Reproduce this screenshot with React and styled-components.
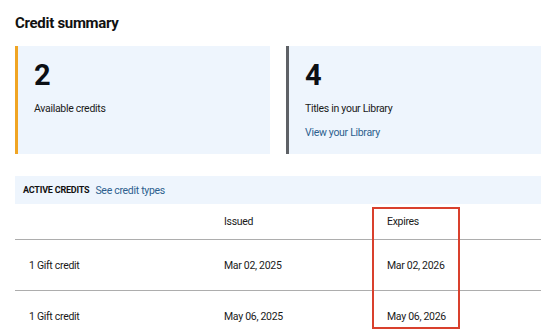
import React from 'react';
import styled, { createGlobalStyle } from 'styled-components';

const GlobalStyle = createGlobalStyle`
  body {
    margin: 0;
    background: #fff;
    font-family: Roboto, "Liberation Sans", Arial, sans-serif;
    color: #161616;
  }
`;

const credits = [
  { name: '1 Gift credit', issued: 'Mar 02, 2025', expires: 'Mar 02, 2026' },
  { name: '1 Gift credit', issued: 'May 06, 2025', expires: 'May 06, 2026' },
];

function App() {
  return (
    <>
      <GlobalStyle />
      <Page>
        <Title>Credit summary</Title>
        <Cards>
          <Card accent="#f0a524">
            <Count>2</Count>
            <Label>Available credits</Label>
          </Card>
          <Card accent="#5e6166">
            <Count>4</Count>
            <Label>Titles in your Library</Label>
            <CardLink href="#">View your Library</CardLink>
          </Card>
        </Cards>
        <Bar>
          <BarTitle>Active credits</BarTitle>
          <BarLink href="#">See credit types</BarLink>
        </Bar>
        <TableWrap>
          <Row header>
            <Cell />
            <Cell>Issued</Cell>
            <Cell>Expires</Cell>
          </Row>
          {credits.map((c, i) => (
            <Row key={i}>
              <Cell>{c.name}</Cell>
              <Cell>{c.issued}</Cell>
              <Cell>{c.expires}</Cell>
            </Row>
          ))}
          <Highlight />
        </TableWrap>
      </Page>
    </>
  );
}

const Page = styled.div`
  padding: 13px 9px 0 15px;
`;

const Title = styled.h1`
  margin: 0;
  font-size: 15px;
  line-height: 20px;
  font-weight: 700;
  letter-spacing: -0.3px;
  color: #111;
`;

const Cards = styled.div`
  display: grid;
  grid-template-columns: 1fr 1fr;
  gap: 16px;
  margin-top: 13px;
`;

const Card = styled.div`
  height: 108px;
  box-sizing: border-box;
  background: #eef5fd;
  border-left: 3px solid ${(p) => p.accent};
  padding: 15px 16px 0 16px;
  display: flex;
  flex-direction: column;
  align-items: flex-start;
`;

const Count = styled.div`
  font-size: 29px;
  line-height: 28px;
  font-weight: 700;
  color: #0c0f14;
`;

const Label = styled.div`
  margin-top: 12px;
  font-size: 10.5px;
  line-height: 16px;
  letter-spacing: -0.3px;
  color: #1a1a1a;
`;

const CardLink = styled.a`
  margin-top: 8px;
  font-size: 10.5px;
  line-height: 16px;
  letter-spacing: -0.3px;
  color: #2d5f8e;
  text-decoration: none;
`;

const Bar = styled.div`
  margin-top: 22px;
  height: 28px;
  background: #eef5fd;
  display: flex;
  align-items: center;
  gap: 6px;
  padding-left: 8px;
`;

const BarTitle = styled.span`
  font-size: 9px;
  font-weight: 700;
  letter-spacing: -0.2px;
  text-transform: uppercase;
  color: #111;
`;

const BarLink = styled.a`
  font-size: 10.5px;
  letter-spacing: -0.3px;
  color: #2d5f8e;
  text-decoration: none;
`;

const TableWrap = styled.div`
  position: relative;
`;

const Row = styled.div`
  display: grid;
  grid-template-columns: 195px 163px 1fr;
  height: ${(p) => (p.header ? '35px' : '50px')};
  align-items: center;
  border-bottom: 1px solid #adadad;
  &:last-of-type {
    border-bottom: none;
  }
`;

const Cell = styled.div`
  padding-left: 14px;
  font-size: 10.5px;
  letter-spacing: -0.3px;
  color: #1a1a1a;
`;

const Highlight = styled.div`
  position: absolute;
  left: 357px;
  top: 3px;
  width: 88px;
  height: 122px;
  box-sizing: border-box;
  border: 2px solid #d9402d;
  pointer-events: none;
`;

export default App;
